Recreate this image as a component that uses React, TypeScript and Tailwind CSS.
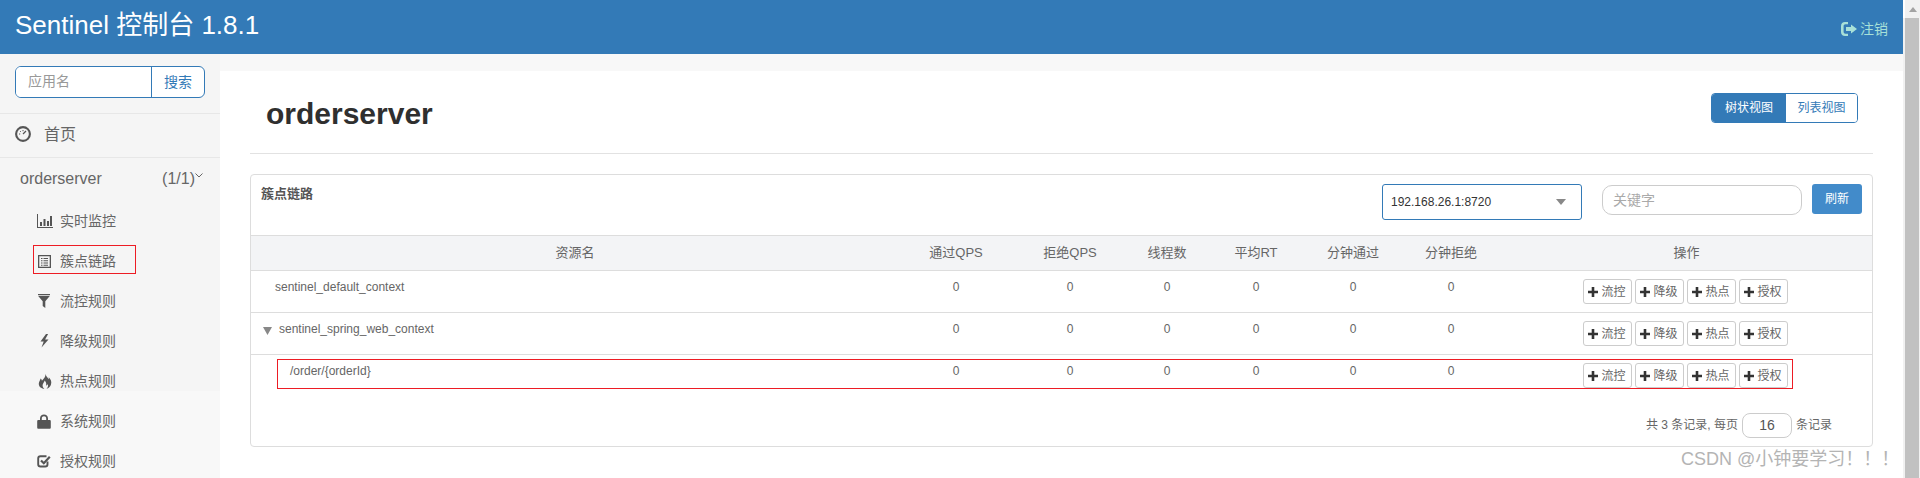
import React from "react";

const FONT = "font-['Liberation_Sans','Noto_Sans_CJK_SC',sans-serif]";

type IconProps = { className?: string };

const Dashboard = ({ className }: IconProps) => (
  <svg viewBox="0 0 16 16" className={className} fill="none" stroke="currentColor">
    <circle cx="8" cy="8" r="6.9" strokeWidth="2.1" />
    <path d="M8 8 L11 5" strokeWidth="1.3" />
    <path d="M4 8h1.2M8 4v1.2M5 5l.8.8" strokeWidth="1" />
  </svg>
);
const Stats = ({ className }: IconProps) => (
  <svg viewBox="0 0 16 16" className={className} fill="currentColor">
    <path d="M0 1h1v13h15v1H0z" />
    <path d="M3 9h2v4H3zM6.5 6h2v7h-2zM10 8h2v5h-2zM13 3h2v10h-2z" />
  </svg>
);
const ListAlt = ({ className }: IconProps) => (
  <svg viewBox="0 0 14 15" className={className} fill="currentColor">
    <path fillRule="evenodd" d="M0 1h13v13H0zM1.3 2.3v10.4h10.4V2.3z" />
    <path d="M3 4h1.5v1H3zM5.5 4H10v1H5.5zM3 6.3h1.5v1H3zM5.5 6.3H10v1H5.5zM3 8.6h1.5v1H3zM5.5 8.6H10v1H5.5zM3 10.7h1.5v1H3zM5.5 10.7H10v1H5.5z" />
  </svg>
);
const Filter = ({ className }: IconProps) => (
  <svg viewBox="0 0 12 14" className={className} fill="currentColor">
    <path d="M0 0h12v1H0zM0 1.8h12L7.3 7.2V14L4.7 12V7.2z" />
  </svg>
);
const Flash = ({ className }: IconProps) => (
  <svg viewBox="1.500 0 9 14" className={className} fill="currentColor">
    <path d="M7.500 0 2 7.500h3.200L3 13.500 10 5.500H6.600L9.600 0z" />
  </svg>
);
const Fire = ({ className }: IconProps) => (
  <svg viewBox="0 0 14 15" className={className} fill="currentColor">
    <path d="M7.500 0c.8 2.600 2.200 3.600 3.200 5.200.2-.8.200-1.300 0-2C12.500 5 14 7.200 13 10.500c-.6 2-2.400 3.700-4.500 4.300 1.500-1.300 2-3 1.100-4.800-.3 1-.8 1.400-1.500 1.600.5-2-.1-3.800-1.600-5-.1 2-2.500 3.400-1.700 6.200.3 1 .9 1.600 1.600 2.200C3 14.500.6 12.500.8 9.500.9 7.500 2.200 6.500 2.600 4.500c.9.700 1.200 1.300 1.300 2.200C5.600 5 7.800 3 7.500 0z" />
  </svg>
);
const Lock = ({ className }: IconProps) => (
  <svg viewBox="0 0 14 15" className={className} fill="currentColor">
    <path fillRule="evenodd" d="M3 6V4.500C3 2 4.800.5 7 .5s4 1.500 4 4V6h1.500c.8 0 1.300.5 1.300 1.300v6.200c0 .8-.5 1.300-1.300 1.300h-11C.7 14.800.2 14.300.2 13.500V7.300C.2 6.500.7 6 1.500 6zm1.800 0h4.400V4.500C9.200 3 8.300 2.200 7 2.200S4.800 3 4.800 4.500z" />
  </svg>
);
const Check = ({ className }: IconProps) => (
  <svg viewBox="0 0 14 14" className={className} fill="none" stroke="currentColor">
    <path d="M10.500 7.500v2.700c0 1.400-.8 2.300-2.300 2.300H3.500c-1.400 0-2.300-.9-2.300-2.300V4.500c0-1.500.9-2.300 2.300-2.300h6" strokeWidth="1.900" />
    <path d="M4 6.500 6.800 9.200 12.800 2.800" strokeWidth="2.200" />
  </svg>
);
const LogOut = ({ className }: IconProps) => (
  <svg viewBox="0 0 16 14" className={className} fill="currentColor">
    <path d="M7 0v2.300H4.500C3.300 2.300 2.600 3 2.600 4.200v5.600c0 1.200.7 1.900 1.900 1.900H7V14H4C1.600 14 0 12.400 0 10V4C0 1.600 1.600 0 4 0z" />
    <path d="M10 2.500 16 7l-6 4.500V9H5V5h5z" />
  </svg>
);
const Plus = ({ className }: IconProps) => (
  <svg viewBox="0 0 10 10" className={className} fill="currentColor">
    <path d="M3.700 0h2.600v3.700H10v2.600H6.300V10H3.700V6.300H0V3.700h3.700z" />
  </svg>
);
const Caret = ({ className }: IconProps) => (
  <svg viewBox="0 0 10 6" preserveAspectRatio="none" className={className} fill="currentColor">
    <path d="M0 0h10L5 6z" />
  </svg>
);

const subItems = [
  { label: "实时监控", icon: <Stats className="w-4 h-4" /> },
  { label: "簇点链路", icon: <ListAlt className="w-[14px] h-[15px] ml-[1px]" />, marked: true },
  { label: "流控规则", icon: <Filter className="w-3 h-[14px] ml-[1px] mr-[2px]" /> },
  { label: "降级规则", icon: <Flash className="w-[9px] h-[14px] ml-[3px] mr-[2px]" /> },
  { label: "热点规则", icon: <Fire className="w-[14px] h-[15px] ml-[1px]" /> },
];
const lowerItems = [
  { label: "系统规则", icon: <Lock className="w-[14px] h-[15px]" /> },
  { label: "授权规则", icon: <Check className="w-[14px] h-[14px]" /> },
];

function SubRow({ label, icon, marked }: { label: string; icon: React.ReactNode; marked?: boolean }) {
  return (
    <div className="relative h-10 pt-5 pl-[37px] flex items-center text-sm text-[#666]">
      <span className="w-[23px] text-[#555] flex items-center">{icon}</span>
      <span>{label}</span>
      {marked && (
        <div className="absolute left-[33px] top-[14px] w-[103px] h-[29px] border border-[#ed1c24]" />
      )}
    </div>
  );
}

const rows = [
  { name: "sentinel_default_context", cls: "pl-[24px]" },
  { name: "sentinel_spring_web_context", cls: "pl-[12px]", caret: true },
  { name: "/order/{orderId}", cls: "pl-[39px]" },
];
const heads = ["通过QPS", "拒绝QPS", "线程数", "平均RT", "分钟通过", "分钟拒绝"];

function TableRow({ row, last }: { row: (typeof rows)[number]; last: boolean }) {
  const b = last ? "" : "border-b border-[#ddd]";
  return (
    <tr>
      <td className={`h-[42px] align-top pt-[9px] leading-[14px] ${row.cls} ${b}`}>
        {row.caret && <Caret className="inline-block w-[9px] h-[8px] mr-[7px] text-[#888] align-[-2px]" />}
        {row.name}
      </td>
      {heads.map((h) => (
        <td key={h} className={`align-top pt-[9px] leading-[14px] text-center ${b}`}>
          0
        </td>
      ))}
      <td className={`align-top pt-[8px] ${b}`}>
        <div className="flex justify-center gap-[3px] pr-[3px]">
          {["流控", "降级", "热点", "授权"].map((t) => (
            <button
              key={t}
              className="w-[49px] h-[25px] border border-[#ccc] rounded-[3px] bg-white flex items-center justify-center gap-[3px] text-xs text-[#666]"
            >
              <Plus className="w-[10px] h-[10px] text-[#333]" />
              {t}
            </button>
          ))}
        </div>
      </td>
    </tr>
  );
}

export default function App() {
  return (
    <div className={`relative flex h-[478px] overflow-hidden bg-white ${FONT}`}>
      <div className="w-[1903px] flex flex-col shrink-0">
        <header className="h-[54px] bg-[#337ab7] flex items-start justify-between text-white shrink-0">
          <div className="pl-[15px] pt-[10px] text-[26px] leading-[30px]">Sentinel 控制台 1.8.1</div>
          <div className="pt-[19px] pr-[15px] flex items-center gap-[3px] text-sm leading-[20px] text-[#a8e0d8]">
            <LogOut className="w-4 h-[14px]" />
            <span>注销</span>
          </div>
        </header>
        <div className="flex flex-1 min-h-0">
          <aside className="w-[220px] shrink-0 bg-[#f8f8f8]">
            <div className="bg-[#f5f5f5]">
              <div className="pt-3 pb-[15px] px-[15px] border-b border-[#e7e7e7]">
                <div className="flex h-8 w-[190px] border border-[#337ab7] rounded-[6px] bg-white overflow-hidden text-sm">
                  <input
                    placeholder="应用名"
                    className="w-[135px] pl-3 pb-[3px] outline-none placeholder:text-[#999] bg-white"
                  />
                  <div className="flex-1 border-l border-[#337ab7] text-[#337ab7] flex items-center justify-center">
                    搜索
                  </div>
                </div>
              </div>
              <div className="h-[44px] pl-[15px] flex items-center border-b border-[#e7e7e7] text-[#666] text-base">
                <Dashboard className="w-4 h-4 text-[#555] mr-[13px] mb-[3px]" />
                <span className="mb-[1px]">首页</span>
              </div>
              <div className="h-[33px] pt-[9px] pl-5 pr-[17px] flex items-center justify-between text-base text-[#666]">
                <span>orderserver</span>
                <span className="flex items-start">
                  (1/1)
                  <svg viewBox="0 0 8 5" className="w-2 h-[5px] mt-[6px]" fill="none" stroke="currentColor" strokeWidth="1">
                    <path d="M.5.5 4 4 7.500.5" />
                  </svg>
                </span>
              </div>
              {subItems.map((s) => (
                <SubRow key={s.label} {...s} />
              ))}
            </div>
            {lowerItems.map((s) => (
              <SubRow key={s.label} {...s} />
            ))}
          </aside>
          <main className="flex-1 bg-[#f8f8f8] pt-[17px] min-w-0">
            <div className="h-full bg-white px-[30px]">
              <div className="h-[83px] border-b border-[#e2e2e2] flex items-start justify-between pl-4 pr-[15px]">
                <h1 className="pt-[25px] text-[30px] leading-[36px] font-bold text-[#2f2f2f]">orderserver</h1>
                <div className="mt-[22px] flex h-[30px] w-[147px] text-xs rounded-[4px] border border-[#337ab7] overflow-hidden">
                  <div className="w-[74px] bg-[#337ab7] text-white flex items-center justify-center">树状视图</div>
                  <div className="flex-1 bg-white text-[#337ab7] flex items-center justify-center">列表视图</div>
                </div>
              </div>
              <section className="mt-5 h-[273px] border border-[#ddd] rounded-[4px] text-xs text-[#666]">
                <div className="h-[60px] flex items-start pl-[10px] pr-[10px]">
                  <div className="flex-1 pt-[11px] text-[13px] leading-[16px] font-bold text-[#555]">簇点链路</div>
                  <div className="mt-[9px] w-[200px] h-[36px] border border-[#337ab7] rounded-[3px] pl-[8px] pr-[15px] flex items-center justify-between text-[#333]">
                    <span>192.168.26.1:8720</span>
                    <Caret className="w-[10px] h-[6px] text-[#888]" />
                  </div>
                  <input
                    placeholder="关键字"
                    className="ml-5 mt-[10px] w-[200px] h-[30px] border border-[#ccc] rounded-[10px] pl-[10px] text-sm outline-none placeholder:text-[#aaa]"
                  />
                  <button className="ml-[10px] mt-[9px] w-[50px] h-[30px] rounded-[3px] bg-[#428bca] text-white text-xs">
                    刷新
                  </button>
                </div>
                <table className="w-full table-fixed border-collapse">
                  <colgroup>
                    <col className="w-[648px]" />
                    <col className="w-[114px]" />
                    <col className="w-[114px]" />
                    <col className="w-[80px]" />
                    <col className="w-[98px]" />
                    <col className="w-[96px]" />
                    <col className="w-[100px]" />
                    <col />
                  </colgroup>
                  <thead>
                    <tr className="bg-[#f3f4f6] text-[13px] font-normal text-[#666]">
                      <th className="h-[35px] font-normal border-y border-[#ddd]">资源名</th>
                      {heads.map((h) => (
                        <th key={h} className="font-normal border-y border-[#ddd]">
                          {h}
                        </th>
                      ))}
                      <th className="font-normal border-y border-[#ddd]">操作</th>
                    </tr>
                  </thead>
                  <tbody>
                    {rows.map((r, i) => (
                      <TableRow key={r.name} row={r} last={i === rows.length - 1} />
                    ))}
                  </tbody>
                </table>
                <div className="mt-[16px] pr-10 flex items-center justify-end gap-1 leading-[16px]">
                  <span>共 3 条记录, 每页</span>
                  <input
                    readOnly
                    value="16"
                    className="w-[50px] h-[25px] border border-[#ccc] rounded-[8px] text-center text-sm text-[#555] outline-none"
                  />
                  <span>条记录</span>
                </div>
              </section>
            </div>
          </main>
        </div>
      </div>
      <div className="w-[17px] shrink-0 bg-[#f1f1f1] flex flex-col items-center">
        <div className="w-full h-[18px] bg-white pl-[2px]">
          <div className="h-full bg-[#f1f1f1] flex items-center justify-center">
            <Caret className="w-2 h-[5px] rotate-180 text-[#a3a3a3]" />
          </div>
        </div>
        <div className="flex-1 w-full pl-[2px] pr-[1px] bg-[#f1f1f1]">
          <div className="h-full bg-[#c1c1c1]" />
        </div>
      </div>
      {/* red annotation over the third table row */}
      <div className="absolute left-[277px] top-[359px] w-[1516px] h-[30px] border border-[#ed1c24]" />
      {/* image watermark */}
      <div className="absolute left-[1681px] top-[448px] text-[18px] leading-[22px] text-[#b4b4b4] whitespace-nowrap">
        CSDN @小钟要学习！！！
      </div>
    </div>
  );
}
